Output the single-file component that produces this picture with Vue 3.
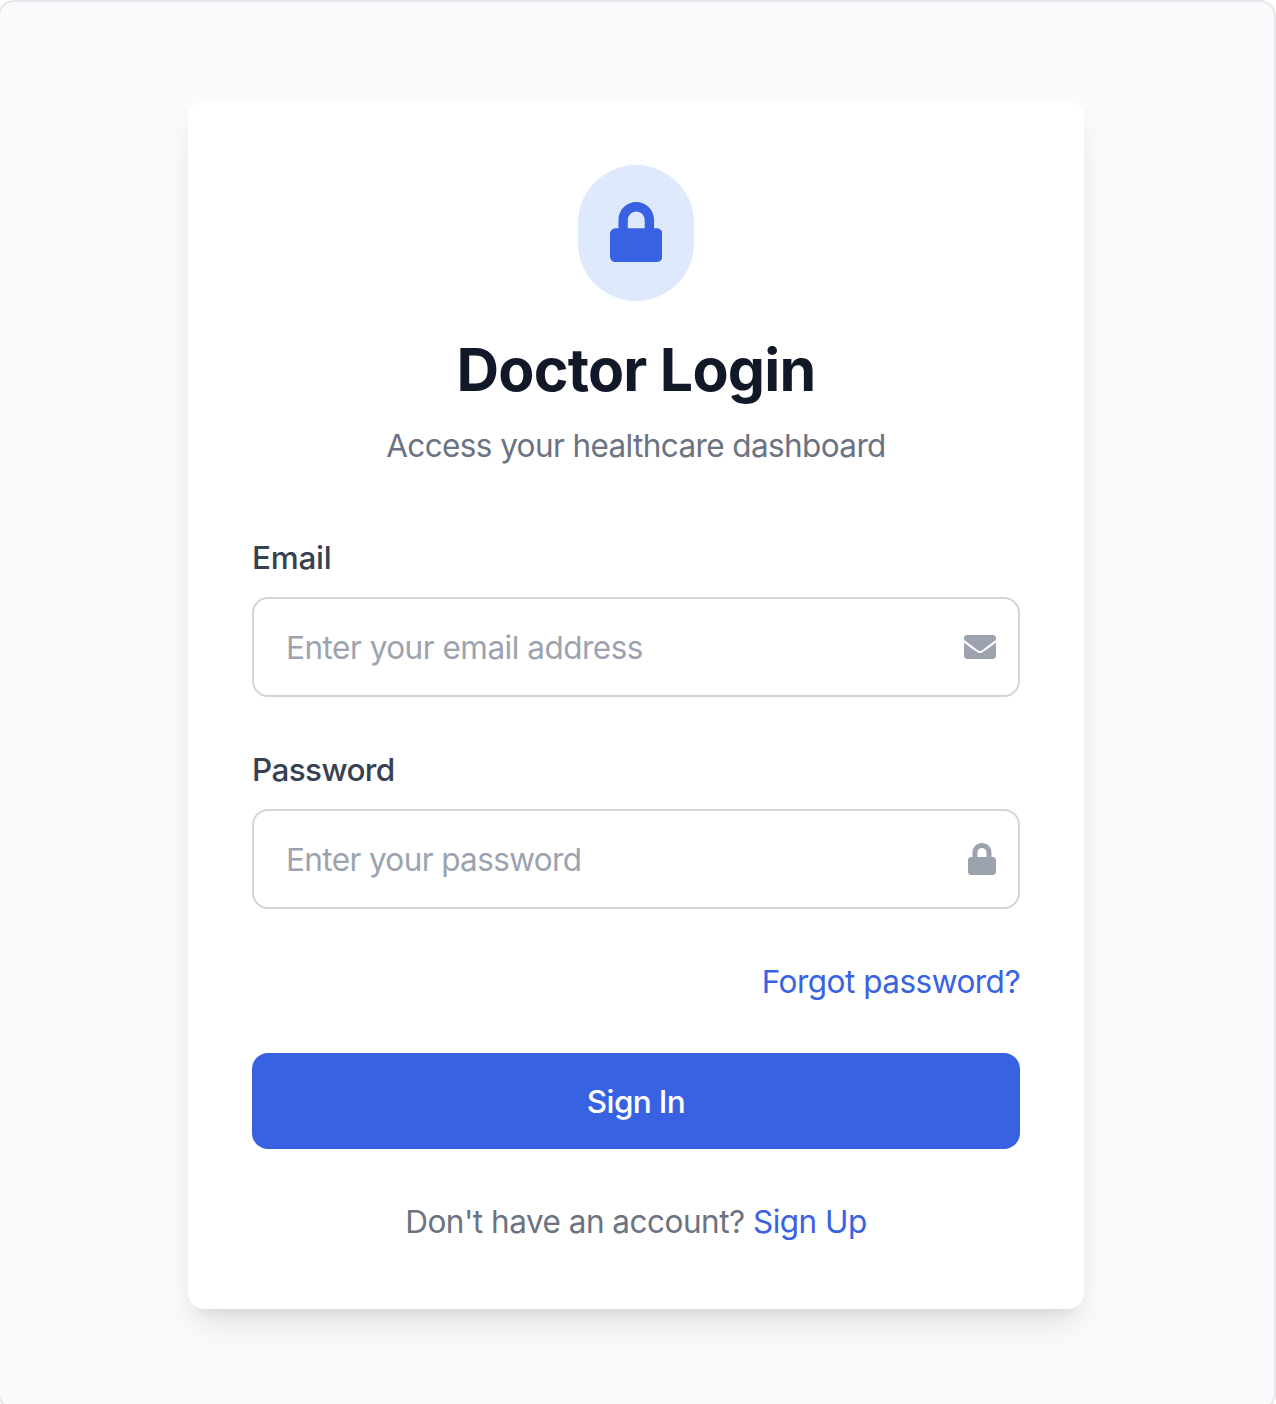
<script setup>
const fields = [
  { id: 'email', label: 'Email', type: 'email', placeholder: 'Enter your email address', icon: 'mail' },
  { id: 'password', label: 'Password', type: 'password', placeholder: 'Enter your password', icon: 'lock' },
]
const lockPath = 'M400 224h-24v-72C376 68.200 307.800 0 224 0S72 68.200 72 152v72H48c-26.500 0-48 21.500-48 48v192c0 26.500 21.500 48 48 48h352c26.500 0 48-21.500 48-48V272c0-26.500-21.500-48-48-48zm-104 0H152v-72c0-39.700 32.300-72 72-72s72 32.300 72 72v72z'
const mailPath = 'M502.300 190.800c3.900-3.100 9.700-.2 9.700 4.700V400c0 26.500-21.500 48-48 48H48c-26.500 0-48-21.500-48-48V195.600c0-5 5.700-7.800 9.700-4.700 22.400 17.400 52.100 39.500 154.100 113.600 21.100 15.400 56.700 47.800 92.200 47.600 35.700.3 72-32.800 92.300-47.600 102-74.100 131.600-96.300 154-113.700zM256 320c23.200.4 56.600-29.200 73.400-41.400 132.700-96.300 142.800-104.700 173.400-128.700 5.800-4.500 9.200-11.500 9.200-18.900v-19c0-26.500-21.500-48-48-48H48c-26.500 0-48 21.500-48 48v19c0 7.400 3.400 14.300 9.200 18.900 30.600 23.900 40.700 32.400 173.400 128.700 16.800 12.200 50.200 41.800 73.400 41.400z'
</script>

<template>
  <div class="viewport">
    <main class="page">
      <form class="card" @submit.prevent>
        <header class="header">
          <div class="badge">
            <svg viewBox="0 0 448 512" width="52.5" height="60"><path :d="lockPath" /></svg>
          </div>
          <h1>Doctor Login</h1>
          <p class="subtitle">Access your healthcare dashboard</p>
        </header>
        <div v-for="field in fields" :key="field.id" class="field" :class="field.id">
          <label :for="field.id">{{ field.label }}</label>
          <div class="control">
            <input :id="field.id" :type="field.type" :placeholder="field.placeholder" />
            <svg v-if="field.icon === 'mail'" viewBox="0 0 512 512" width="32" height="32"><path :d="mailPath" /></svg>
            <svg v-else viewBox="0 0 448 512" width="28" height="32"><path :d="lockPath" /></svg>
          </div>
        </div>
        <div class="forgot"><a>Forgot password?</a></div>
        <button type="submit">Sign In</button>
        <p class="signup">Don't have an account? <a>Sign Up</a></p>
      </form>
    </main>
  </div>
</template>

<style>
body { background: #fff; }
</style>

<style scoped>
* { box-sizing: border-box; }
.viewport { height: 1404px; overflow: hidden; }
.page {
  height: 1410px;
  margin-left: -2px;
  padding: 99px 0 0 188px;
  border: 2px solid #e5e7eb;
  border-radius: 16px;
  background: #f9fafb;
  font-family: Inter, "Liberation Sans", sans-serif;
  font-size: 31.5px;
  font-weight: 440;
  line-height: 50px;
  letter-spacing: -.5px;
  color: #6b7280;
}
.card {
  width: 896px;
  height: 1208px;
  padding: 64px;
  border-radius: 16px;
  background: #fff;
  box-shadow: 0 20px 30px -6px rgba(0, 0, 0, .1), 0 8px 12px -8px rgba(0, 0, 0, .1);
}
.header { text-align: center; }
.badge {
  display: flex;
  justify-content: center;
  width: 116px;
  height: 136px;
  margin: 0 auto 32px;
  padding-top: 37px;
  border-radius: 58px;
  background: #dee9fc;
}
svg { fill: currentColor; }
.badge svg { color: #3962e3; }
h1 { margin: 0; font-size: 59px; line-height: 73px; font-weight: 700; letter-spacing: -.78px; color: #111827; }
.subtitle { margin: 16px 0 63px; line-height: 48px; letter-spacing: -.61px; }
.field { margin-bottom: 48px; }
label { display: block; height: 48px; margin-bottom: 16px; font-weight: 500; letter-spacing: -.25px; color: #374151; }
.password label { letter-spacing: -.62px; }
.control { position: relative; height: 100px; }
.control svg { position: absolute; right: 24px; top: 34px; color: #9ca3af; }
input {
  width: 100%;
  height: 100px;
  padding: 0 80px 0 32px;
  border: 2px solid #d1d5db;
  border-radius: 16px;
  outline: none;
  background: #fff;
  font: inherit;
  letter-spacing: -.5px;
}
.password input { letter-spacing: -.62px; }
input::placeholder { color: #9ca3af; opacity: 1; }
.forgot { height: 48px; margin-bottom: 48px; text-align: right; }
a { color: #3962e3; }
button {
  display: block;
  width: 100%;
  height: 96px;
  padding: 2px 0 0;
  border: 0;
  border-radius: 16px;
  background: #3962e3;
  font: inherit;
  font-weight: 500;
  letter-spacing: -.63px;
  color: #fff;
}
.signup { margin: 48px 0 0; text-align: center; }
</style>
